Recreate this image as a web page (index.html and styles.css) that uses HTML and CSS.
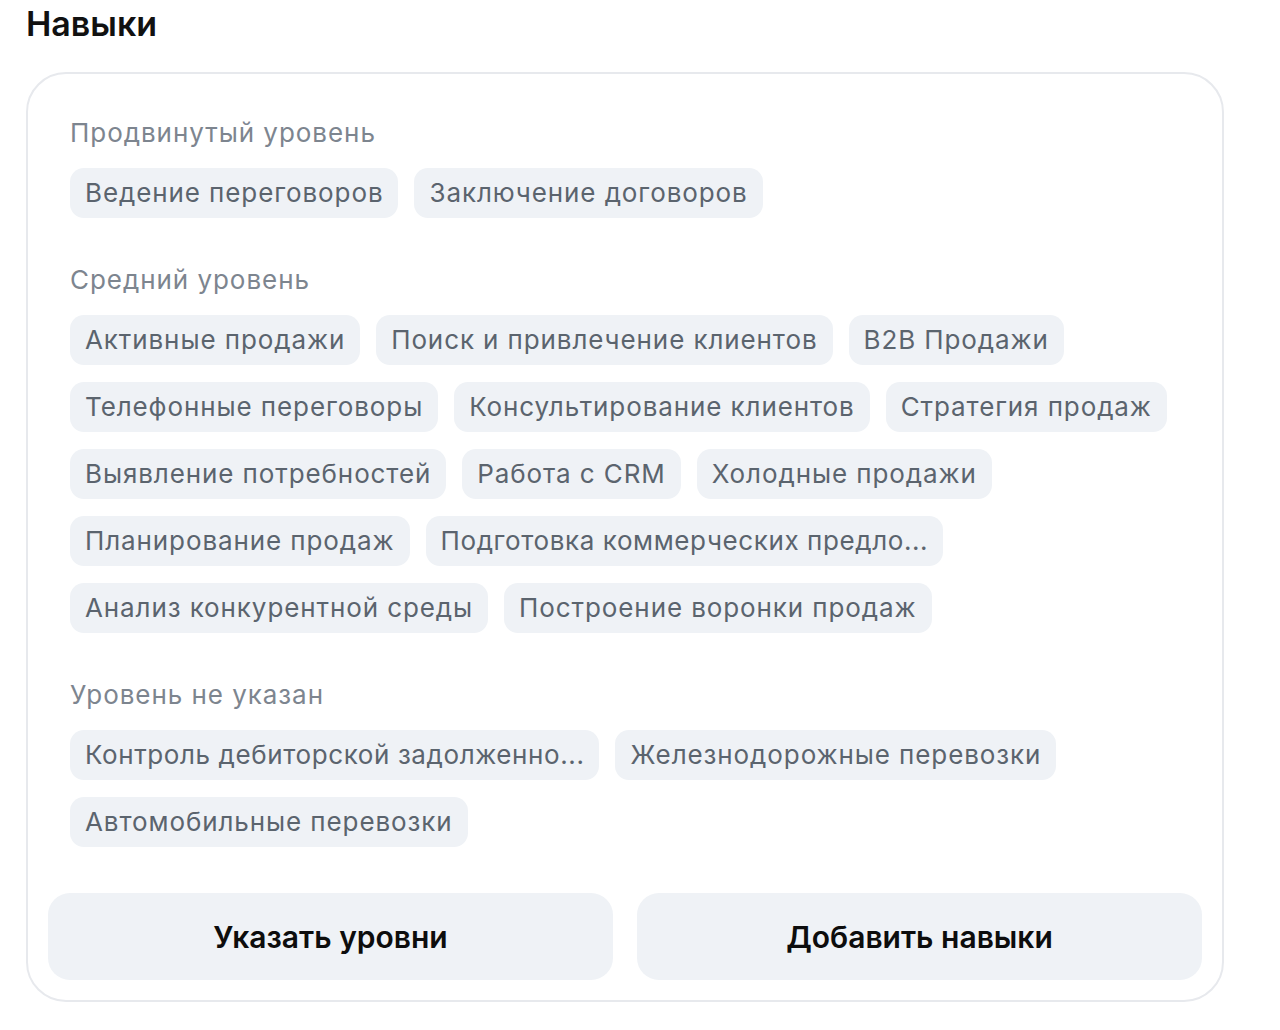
FILE: index.html
```html
<!DOCTYPE html>
<html lang="ru">
<head>
<meta charset="utf-8">
<title>Навыки</title>
<link rel="stylesheet" href="styles.css">
</head>
<body>
<main class="page">
  <h1 class="title">Навыки</h1>
  <section class="card">
    <div class="content">
      <div class="group">
        <div class="label">Продвинутый уровень</div>
        <div class="chips">
          <span class="chip">Ведение переговоров</span>
          <span class="chip">Заключение договоров</span>
        </div>
      </div>
      <div class="group">
        <div class="label">Средний уровень</div>
        <div class="chips">
          <span class="chip">Активные продажи</span>
          <span class="chip">Поиск и привлечение клиентов</span>
          <span class="chip">B2B Продажи</span>
          <span class="chip">Телефонные переговоры</span>
          <span class="chip">Консультирование клиентов</span>
          <span class="chip">Стратегия продаж</span>
          <span class="chip">Выявление потребностей</span>
          <span class="chip">Работа с CRM</span>
          <span class="chip">Холодные продажи</span>
          <span class="chip">Планирование продаж</span>
          <span class="chip chip-trunc">Подготовка коммерческих предло...</span>
          <span class="chip">Анализ конкурентной среды</span>
          <span class="chip">Построение воронки продаж</span>
        </div>
      </div>
      <div class="group">
        <div class="label">Уровень не указан</div>
        <div class="chips">
          <span class="chip chip-trunc">Контроль дебиторской задолженно...</span>
          <span class="chip">Железнодорожные перевозки</span>
          <span class="chip">Автомобильные перевозки</span>
        </div>
      </div>
    </div>
    <div class="actions">
      <button class="btn" type="button">Указать уровни</button>
      <button class="btn" type="button">Добавить навыки</button>
    </div>
  </section>
</main>
</body>
</html>
```

FILE: styles.css
```css
* { box-sizing: border-box; }
html, body { margin: 0; padding: 0; background: #ffffff; }
body {
  font-family: Inter, "Noto Sans", "Liberation Sans", sans-serif;
  color: #111;
}
.page {
  width: 1198px;
  margin-left: 26px;
  padding-top: 4px;
}
.title {
  margin: 0 0 28px 0;
  font-size: 34px;
  line-height: 40px;
  font-weight: 600;
  color: #111111;
  letter-spacing: 0;
}
.card {
  border: 2px solid #e7e9ed;
  border-radius: 40px;
  padding: 43px 20px 20px 20px;
}
.content {
  padding: 0 22px;
  display: flex;
  flex-direction: column;
  gap: 46px;
}
.label {
  font-size: 26px;
  line-height: 32px;
  color: #7d858f;
  letter-spacing: 0.95px;
  margin-bottom: 19px;
}
.chips {
  display: flex;
  flex-wrap: wrap;
  gap: 17px 16px;
}
.chip {
  display: inline-block;
  background: #eff2f6;
  color: #5b646e;
  font-size: 26px;
  line-height: 32px;
  letter-spacing: 0.9px;
  padding: 9px 15px;
  border-radius: 14px;
  white-space: nowrap;
}
.chip-trunc {
  letter-spacing: 0.6px;
}
.actions {
  display: grid;
  grid-template-columns: 1fr 1fr;
  gap: 24px;
  margin-top: 46px;
}
.btn {
  height: 87px;
  border: none;
  border-radius: 22px;
  background: #eff2f6;
  font-family: Inter, "Noto Sans", "Liberation Sans", sans-serif;
  font-size: 30px;
  font-weight: 600;
  color: #0d0d0d;
  cursor: pointer;
}
```
